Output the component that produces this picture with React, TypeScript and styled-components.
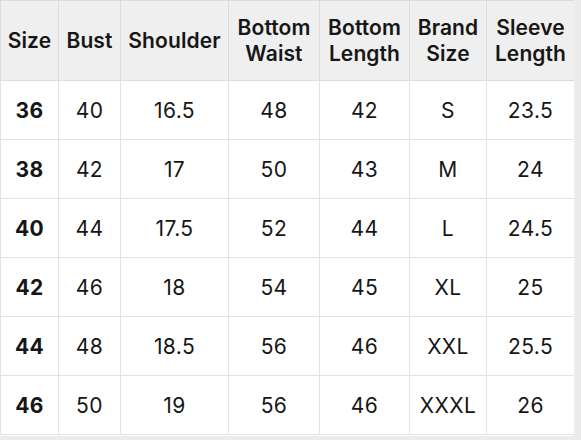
import styled, { createGlobalStyle } from "styled-components";

const GlobalStyle = createGlobalStyle`
  html, body {
    margin: 0;
    padding: 0;
    background: #ececec;
  }
  body {
    font-family: Inter, "Noto Sans", "Liberation Sans", sans-serif;
    color: #161616;
  }
`;

const Wrapper = styled.div`
  width: 574px;
  height: 436px;
  background: #ffffff;
  overflow: hidden;
`;

const Table = styled.table`
  border-collapse: collapse;
  table-layout: fixed;
  width: 574px;
`;

const HeadCell = styled.th<{ $w: number }>`
  width: ${(p) => p.$w}px;
  height: 80px;
  padding: 0;
  box-sizing: border-box;
  background: #efefef;
  border: 1px solid #dcdcdc;
  font-size: 21px;
  font-weight: 600;
  line-height: 26px;
  text-align: center;
  letter-spacing: 0.1px;
`;

const Cell = styled.td<{ $bold?: boolean }>`
  height: 59px;
  padding: 0;
  box-sizing: border-box;
  border: 1px solid #e2e2e2;
  font-size: 21px;
  font-weight: ${(p) => (p.$bold ? 700 : 400)};
  letter-spacing: 0.4px;
  text-align: center;
`;

const columns: { label: string[]; width: number }[] = [
  { label: ["Size"], width: 58 },
  { label: ["Bust"], width: 62 },
  { label: ["Shoulder"], width: 108 },
  { label: ["Bottom", "Waist"], width: 91 },
  { label: ["Bottom", "Length"], width: 90 },
  { label: ["Brand", "Size"], width: 77 },
  { label: ["Sleeve", "Length"], width: 88 },
];

const rows = [
  ["36", "40", "16.5", "48", "42", "S", "23.5"],
  ["38", "42", "17", "50", "43", "M", "24"],
  ["40", "44", "17.5", "52", "44", "L", "24.5"],
  ["42", "46", "18", "54", "45", "XL", "25"],
  ["44", "48", "18.5", "56", "46", "XXL", "25.5"],
  ["46", "50", "19", "56", "46", "XXXL", "26"],
];

const App = () => {
  return (
    <>
      <GlobalStyle />
      <Wrapper>
        <Table>
          <thead>
            <tr>
              {columns.map((c) => (
                <HeadCell key={c.label.join(" ")} $w={c.width}>
                  {c.label.map((line, i) => (
                    <div key={i}>{line}</div>
                  ))}
                </HeadCell>
              ))}
            </tr>
          </thead>
          <tbody>
            {rows.map((r) => (
              <tr key={r[0]}>
                {r.map((v, i) => (
                  <Cell key={i} $bold={i === 0}>
                    {v}
                  </Cell>
                ))}
              </tr>
            ))}
          </tbody>
        </Table>
      </Wrapper>
    </>
  );
};

export default App;
